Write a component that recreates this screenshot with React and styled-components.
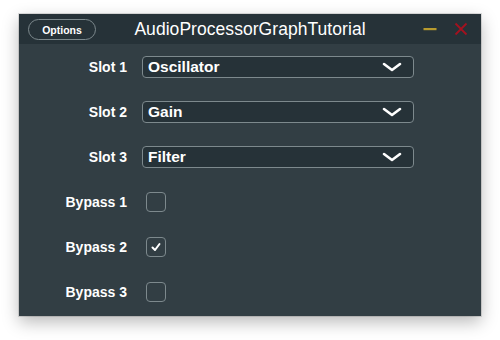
import React, { useState } from "react";
import styled, { createGlobalStyle } from "styled-components";

const GlobalStyle = createGlobalStyle`
  html, body {
    margin: 0;
    padding: 0;
    background: #ffffff;
  }
  body {
    font-family: "Liberation Sans", Arial, sans-serif;
  }
`;

const Page = styled.div`
  padding: 14px 19px;
  width: 500px;
  height: 340px;
  box-sizing: border-box;
`;

const Window = styled.div`
  width: 462px;
  height: 302px;
  background: #323e44;
  display: flex;
  flex-direction: column;
  box-shadow: 0 6px 16px rgba(0, 0, 0, 0.28), 0 0 0 1px rgba(0, 0, 0, 0.12);
`;

const TitleBar = styled.div`
  height: 30px;
  background: #263238;
  display: grid;
  grid-template-columns: 1fr auto 1fr;
  align-items: center;
  padding: 0 9px;
`;

const OptionsButton = styled.button`
  justify-self: start;
  width: 68px;
  height: 21px;
  margin-top: 1px;
  border-radius: 11px;
  border: 1.5px solid #7d898d;
  background: #263238;
  color: #ffffff;
  font-family: "Liberation Sans", Arial, sans-serif;
  font-weight: bold;
  font-size: 10.5px;
  padding: 0;
  cursor: pointer;
`;

const Title = styled.div`
  color: #ffffff;
  font-size: 17.5px;
  letter-spacing: 0.05px;
`;

const WindowButtons = styled.div`
  justify-self: end;
  display: flex;
  align-items: center;
  gap: 17px;
  padding-right: 4px;
`;

const Body = styled.div`
  display: flex;
  flex-direction: column;
  padding-top: 0.5px;
`;

const Row = styled.div`
  height: 45px;
  display: flex;
  align-items: center;
  gap: 15px;
`;

const Label = styled.div`
  width: 108px;
  text-align: right;
  color: #ffffff;
  font-weight: bold;
  font-size: 14px;
`;

const Combo = styled.div`
  width: 272px;
  height: 22px;
  box-sizing: border-box;
  border: 1.5px solid #7d898d;
  border-radius: 4px;
  background: #263238;
  display: flex;
  align-items: center;
  justify-content: space-between;
  padding: 0 11px 0 5px;
  color: #ffffff;
  font-weight: bold;
  font-size: 15.5px;
`;

const Check = styled.div`
  width: 20px;
  height: 20px;
  margin-left: 4px;
  box-sizing: border-box;
  border: 1.5px solid #7d898d;
  border-radius: 4px;
  display: flex;
  align-items: center;
  justify-content: center;
  cursor: pointer;
`;

const Chevron = () => (
  <svg width="20" height="10" viewBox="0 0 20 10">
    <path
      d="M2 2 L10 8 L18 2"
      fill="none"
      stroke="#ffffff"
      strokeWidth="2.6"
      strokeLinecap="round"
      strokeLinejoin="round"
    />
  </svg>
);

const Tick = () => (
  <svg width="12" height="12" viewBox="0 0 12 12">
    <path
      d="M2.5 6.5 L5 9 L9.5 3"
      fill="none"
      stroke="#ffffff"
      strokeWidth="2"
      strokeLinecap="round"
      strokeLinejoin="round"
    />
  </svg>
);

const slots = ["Oscillator", "Gain", "Filter"];

export default function App() {
  const [bypass, setBypass] = useState([false, true, false]);

  const toggle = (i) =>
    setBypass((b) => b.map((v, j) => (j === i ? !v : v)));

  return (
    <Page>
      <GlobalStyle />
      <Window>
        <TitleBar>
          <OptionsButton>Options</OptionsButton>
          <Title>AudioProcessorGraphTutorial</Title>
          <WindowButtons>
            <svg width="14" height="14" viewBox="0 0 14 14">
              <rect x="0.5" y="6" width="13" height="2.2" fill="#b89b2e" />
            </svg>
            <svg width="14" height="14" viewBox="0 0 14 14">
              <path
                d="M1.5 1.5 L12.5 12.5 M12.5 1.5 L1.5 12.5"
                stroke="#a3121f"
                strokeWidth="1.8"
              />
            </svg>
          </WindowButtons>
        </TitleBar>
        <Body>
          {slots.map((s, i) => (
            <Row key={s}>
              <Label>Slot {i + 1}</Label>
              <Combo>
                <span>{s}</span>
                <Chevron />
              </Combo>
            </Row>
          ))}
          {bypass.map((on, i) => (
            <Row key={i}>
              <Label>Bypass {i + 1}</Label>
              <Check onClick={() => toggle(i)}>{on && <Tick />}</Check>
            </Row>
          ))}
        </Body>
      </Window>
    </Page>
  );
}
